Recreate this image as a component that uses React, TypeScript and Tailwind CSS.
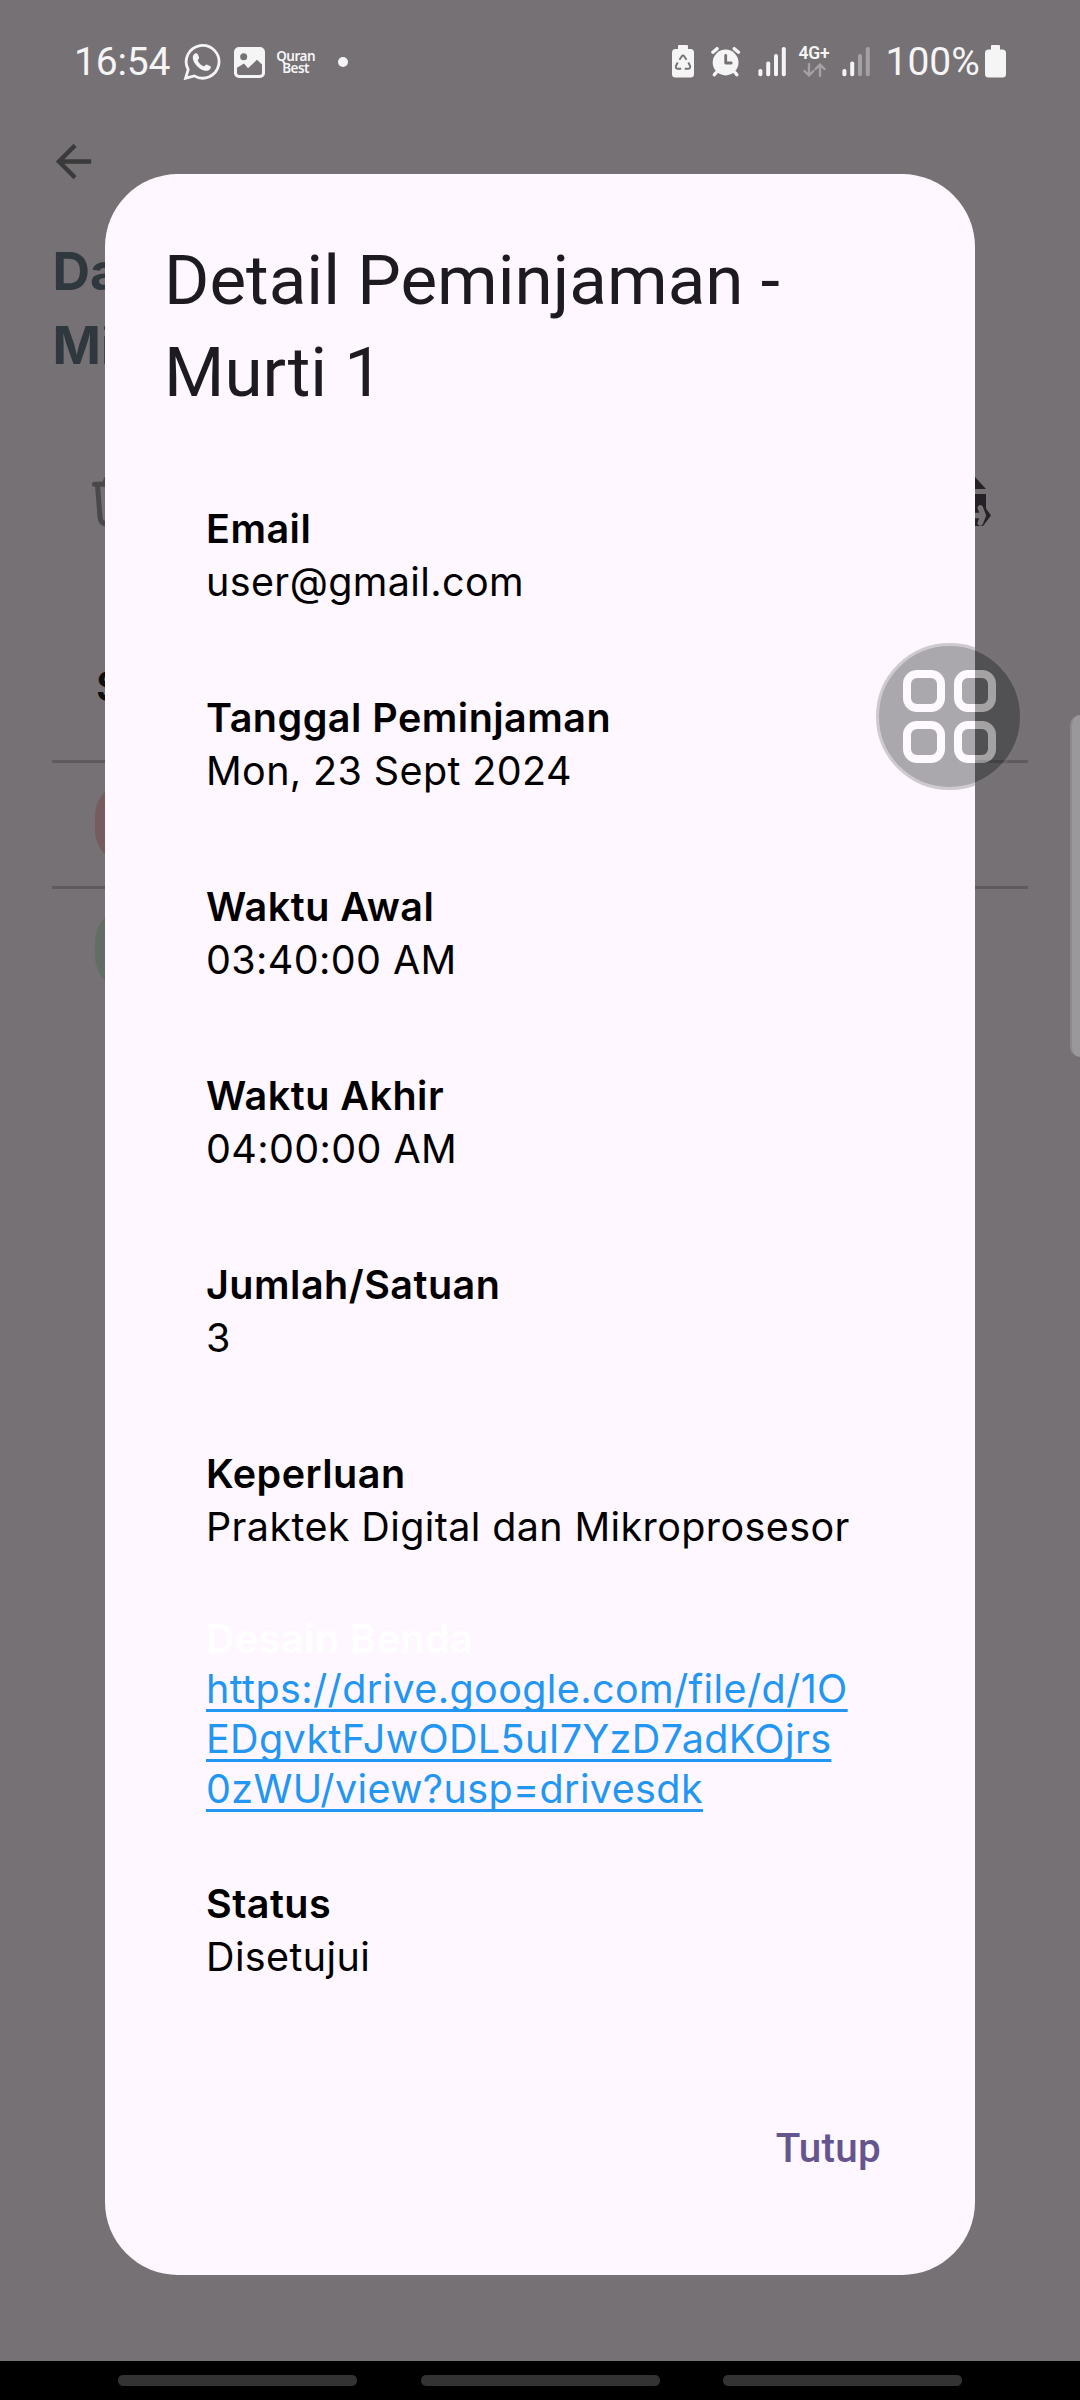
import React from "react";

const fields = [
  { label: "Email", value: "user@gmail.com" },
  { label: "Tanggal Peminjaman", value: "Mon, 23 Sept 2024" },
  { label: "Waktu Awal", value: "03:40:00 AM" },
  { label: "Waktu Akhir", value: "04:00:00 AM" },
  { label: "Jumlah/Satuan", value: "3" },
  { label: "Keperluan", value: "Praktek Digital dan Mikroprosesor" },
];

const linkLines = [
  "https://drive.google.com/file/d/1O",
  "EDgvktFJwODL5uI7YzD7adKOjrs",
  "0zWU/view?usp=drivesdk",
];

function WhatsAppIcon() {
  return (
    <svg className="ml-[13px] h-[38px] w-[38px] shrink-0" viewBox="0 0 38 38" fill="none">
      <path d="M2.6 35.2 5.2 26.6A16.4 16.4 0 1 1 11.3 32.9Z" stroke="#f5f5f5" strokeWidth="2.8" />
      <path
        d="M10.600 11.800c.9-1.500 2.600-2.100 3.600-1.300.7.7 1.500 2.900 1.900 4.100.3 1-.9 1.900-1.400 2.800 1.300 2.900 3.600 4.900 6.400 6 .9-.7 1.500-2 2.500-1.900 1.300.4 3.400 1.300 4.100 2 .6 1.100-.4 3-2 3.800-2.300 1.200-5.600.5-9-1.900-3.200-2.400-5.600-5.600-6.500-8.500-.6-1.900-.5-3.700.4-5.100Z"
        fill="#f5f5f5"
      />
    </svg>
  );
}

function ImageIcon() {
  return (
    <svg className="ml-[12.5px] h-[31px] w-[31px] shrink-0" viewBox="0 0 31 31">
      <path
        fillRule="evenodd"
        fill="#f5f5f5"
        d="M5 0H26a5 5 0 0 1 5 5V26a5 5 0 0 1-5 5H5a5 5 0 0 1-5-5V5a5 5 0 0 1 5-5ZM9.700 6.200a3.500 3.500 0 1 0 0 7 3.500 3.500 0 0 0 0-7ZM3 20.800V25.500a2.500 2.500 0 0 0 2.500 2.500H25.500a2.500 2.500 0 0 0 2.500-2.500V17.500L23 12.800 14 21.200 10 16.600Z"
      />
    </svg>
  );
}

function PowerSaveIcon() {
  return (
    <svg className="h-[33px] w-[22px] shrink-0" viewBox="0 0 22 33">
      <path
        fill="#f5f5f5"
        d="M7 0h8a1 1 0 0 1 1 1v3h2.500A3.500 3.500 0 0 1 22 7.500V29a3.500 3.500 0 0 1-3.500 3.500h-15A3.500 3.500 0 0 1 0 29V7.500A3.500 3.500 0 0 1 3.500 4H6V1a1 1 0 0 1 1-1Z"
      />
      <g fill="none" stroke="#767175" strokeWidth="1.9" strokeLinejoin="round">
        <path d="M7.500 14.800 9.800 11.300Q11 9.700 12.200 11.300L14.500 14.800" />
        <path d="M16.300 17.500 18 20.800Q18.800 23.600 16.500 23.700H12.700" />
        <path d="M9.200 23.700H5.500Q3.200 23.600 4 20.800L5.700 17.500" />
      </g>
    </svg>
  );
}

function AlarmIcon() {
  return (
    <svg className="ml-[17px] h-[30px] w-[30px] shrink-0" viewBox="0 0 30 30" fill="none">
      <circle cx="14.600" cy="15.500" r="12.900" fill="#f5f5f5" />
      <path
        d="M1.900 5.200 6 1.700M23.300 1.700 27.500 5.200M5.200 25.500 3.400 27.600M24 25.500l1.800 2.100"
        stroke="#f5f5f5"
        strokeWidth="3.400"
        strokeLinecap="round"
      />
      <path
        d="M14.700 8.500v7.500h5.500"
        stroke="#767175"
        strokeWidth="2.800"
        strokeLinecap="round"
        strokeLinejoin="round"
      />
    </svg>
  );
}

function SignalIcon({ strong }: { strong: boolean }) {
  const faded = strong ? "#f5f5f5" : "#a4a1a3";
  return (
    <svg className="h-[30px] w-7 shrink-0" viewBox="0 0 28 30">
      <rect x="0.400" y="22" width="4" height="7.300" rx="1.800" fill="#f5f5f5" />
      <rect x="8.200" y="14.500" width="4" height="14.800" rx="1.800" fill="#f5f5f5" />
      <rect x="16" y="7" width="4" height="22.300" rx="1.800" fill={faded} />
      <rect x="23.800" y="0" width="4" height="29.300" rx="1.800" fill={faded} />
    </svg>
  );
}

function StatusBar() {
  return (
    <div className="flex h-[124px] items-center pl-[74px] pr-[74px] font-['Roboto',sans-serif] text-[#f5f5f5]">
      <span className="text-[39px] leading-none tracking-[-0.2px]">16:54</span>
      <WhatsAppIcon />
      <ImageIcon />
      <div className="ml-3 flex w-[38px] flex-col items-center font-['Noto_Sans',sans-serif] text-[13.5px] font-semibold leading-[12px] tracking-[-0.5px]">
        <span>Quran</span>
        <span>Best</span>
      </div>
      <div className="ml-[23px] h-[10px] w-[10px] rounded-full bg-[#f5f5f5]" />
      <div className="ml-auto flex items-center pb-px">
        <PowerSaveIcon />
        <AlarmIcon />
        <div className="ml-[17px]">
          <SignalIcon strong />
        </div>
        <div className="ml-3 flex w-8 flex-col items-center">
          <span className="text-[17.5px] font-semibold leading-[15px] tracking-[-0.1px]">4G+</span>
          <svg
            className="mt-[2px] h-[14px] w-[23px]"
            viewBox="0 0 23 14"
            fill="none"
            stroke="#a4a1a3"
            strokeWidth="2.4"
            strokeLinecap="round"
            strokeLinejoin="round"
          >
            <path d="M6 1v11.500M1.500 8 6 12.500 10.500 8M17 13V1.500M12.500 6 17 1.500 21.500 6" />
          </svg>
        </div>
        <div className="ml-3">
          <SignalIcon strong={false} />
        </div>
        <span className="ml-[15.5px] w-[94px] pt-px text-[39px] leading-none">100%</span>
        <svg className="ml-[5.5px] h-[33px] w-[21px] shrink-0" viewBox="0 0 21 33">
          <path
            fill="#f5f5f5"
            d="M7 0h7a1 1 0 0 1 1 1v3.500h2.500A3.500 3.500 0 0 1 21 8V29a3.500 3.500 0 0 1-3.500 3.500h-14A3.500 3.500 0 0 1 0 29V8A3.500 3.500 0 0 1 3.500 4.500H6V1a1 1 0 0 1 1-1Z"
          />
        </svg>
      </div>
    </div>
  );
}

function DimmedPage() {
  return (
    <div className="flex flex-1 flex-col font-['Inter',sans-serif]">
      <svg className="ml-[47px] mt-[11px] h-[53px] w-[53px]" viewBox="0 0 24 24" fill="#3a3a3a">
        <path d="M20 11H7.830l5.590-5.590L12 4l-8 8 8 8 1.410-1.410L7.830 13H20v-2z" />
      </svg>
      <div className="ml-[52.5px] mt-[47px] text-[52px] font-bold leading-[74px] text-[#2f383f]">
        <div>Da</div>
        <div>Mi</div>
      </div>
      <div className="ml-[91px] mr-[89px] mt-[94px] flex h-[50px] justify-between">
        <svg
          className="h-[50px] w-[50px]"
          viewBox="0 0 50 50"
          fill="none"
          stroke="#4a494a"
          strokeWidth="5"
          strokeLinecap="round"
          strokeLinejoin="round"
        >
          <path d="M3.500 7.300H46.500M6.500 8 9 40Q9.500 47 16 47H34Q40.500 47 41 40L43.500 8M13.500 7 16 0H34l2.500 7" />
        </svg>
        <svg className="h-[50px] w-[50px]" viewBox="0 0 50 50">
          <path fill="#252127" d="M4 0H34L45 12H4ZM4 17H45V31.500L50 38.500 42 49H4Z" />
          <path
            fill="none"
            stroke="#767175"
            strokeWidth="5.5"
            strokeLinecap="round"
            strokeLinejoin="round"
            d="M28 38.500H42M39.300 30.800 42.300 38.500 39.300 46"
          />
        </svg>
      </div>
      <div className="mx-[52px] mt-[121px]">
        <div className="flex h-[115px] items-start border-b-[3px] border-[#5e5a5e] pl-[44px] text-[41px] font-semibold text-black/90">
          <span className="mt-[10px] leading-[56px]">S</span>
        </div>
        <div className="flex h-[126px] items-center border-b-[3px] border-[#5e5a5e] pb-1 pl-[43px]">
          <div className="h-[84px] w-[84px] rounded-[35px] bg-[#755c5f]" />
        </div>
        <div className="flex h-[126px] items-center pb-[6px] pl-[43px]">
          <div className="h-[84px] w-[84px] rounded-[35px] bg-[#626d66]" />
        </div>
      </div>
    </div>
  );
}

function NavigationBar() {
  return (
    <div className="flex h-[39px] gap-[63.5px] bg-black pl-[118px] pt-[14px]">
      <div className="h-[11px] w-[239px] rounded-[5px] bg-[#333333]" />
      <div className="h-[11px] w-[239px] rounded-[5px] bg-[#333333]" />
      <div className="h-[11px] w-[239px] rounded-[5px] bg-[#333333]" />
    </div>
  );
}

function DetailDialog() {
  return (
    <div className="absolute left-[105px] top-[174px] flex h-[2101px] w-[870px] flex-col rounded-[73px] bg-[#fef7ff] pl-[59px] pt-[61px]">
      <h1 className="font-['Roboto',sans-serif] text-[69.2px] leading-[92px] text-[#1d1b20]">
        Detail Peminjaman -<br />
        Murti 1
      </h1>
      <dl className="ml-[42px] mt-[84px] flex flex-col font-['Inter',sans-serif] text-[39.5px] text-black">
        {fields.map((field) => (
          <div key={field.label} className="h-[189px]">
            <dt className="font-semibold leading-[53px] tracking-[0.48px]">{field.label}</dt>
            <dd className="leading-[53px] tracking-[0.38px]">{field.value}</dd>
          </div>
        ))}
        <div className="-mt-[23px] h-[200px]">
          <dt className="font-semibold leading-[50px] tracking-[0.48px] text-white">Desain Benda</dt>
          <dd className="tracking-[0.38px] text-[#2196f3]">
            {linkLines.map((line) => (
              <div key={line} className="leading-[50px]">
                <span className="underline decoration-[3px] underline-offset-[6px] [text-decoration-skip-ink:none]">
                  {line}
                </span>
              </div>
            ))}
          </dd>
        </div>
        <div className="mt-[64px]">
          <dt className="font-semibold leading-[53px] tracking-[0.48px]">Status</dt>
          <dd className="leading-[53px] tracking-[0.38px]">Disetujui</dd>
        </div>
      </dl>
      <button className="mb-[98px] mr-[94px] mt-auto self-end font-['Roboto',sans-serif] text-[40.4px] font-medium leading-[56px] tracking-[0.26px] text-[#65558f]">
        Tutup
      </button>
    </div>
  );
}

function AssistiveButton() {
  return (
    <div className="absolute left-[876px] top-[643px] grid h-[147px] w-[147px] grid-cols-2 place-content-center gap-[9.5px] rounded-full border-[3px] border-[#767676] bg-[#0e1516] opacity-[0.345]">
      {[0, 1, 2, 3].map((cell) => (
        <div
          key={cell}
          className={
            cell % 2 === 0
              ? "h-[41.5px] w-[41.5px] justify-self-end rounded-[14px] border-8 border-white"
              : "h-[41.5px] w-[41.5px] justify-self-start rounded-[14px] border-8 border-white"
          }
        />
      ))}
    </div>
  );
}

export default function App() {
  return (
    <div className="relative flex h-[2400px] w-[1080px] flex-col overflow-hidden bg-[#767175]">
      <StatusBar />
      <DimmedPage />
      <NavigationBar />
      <DetailDialog />
      <AssistiveButton />
      <div className="absolute right-0 top-[715px] h-[342px] w-[10px] rounded-l-[10px] border-l-2 border-[#8c898c] bg-[#9b989b]" />
    </div>
  );
}
